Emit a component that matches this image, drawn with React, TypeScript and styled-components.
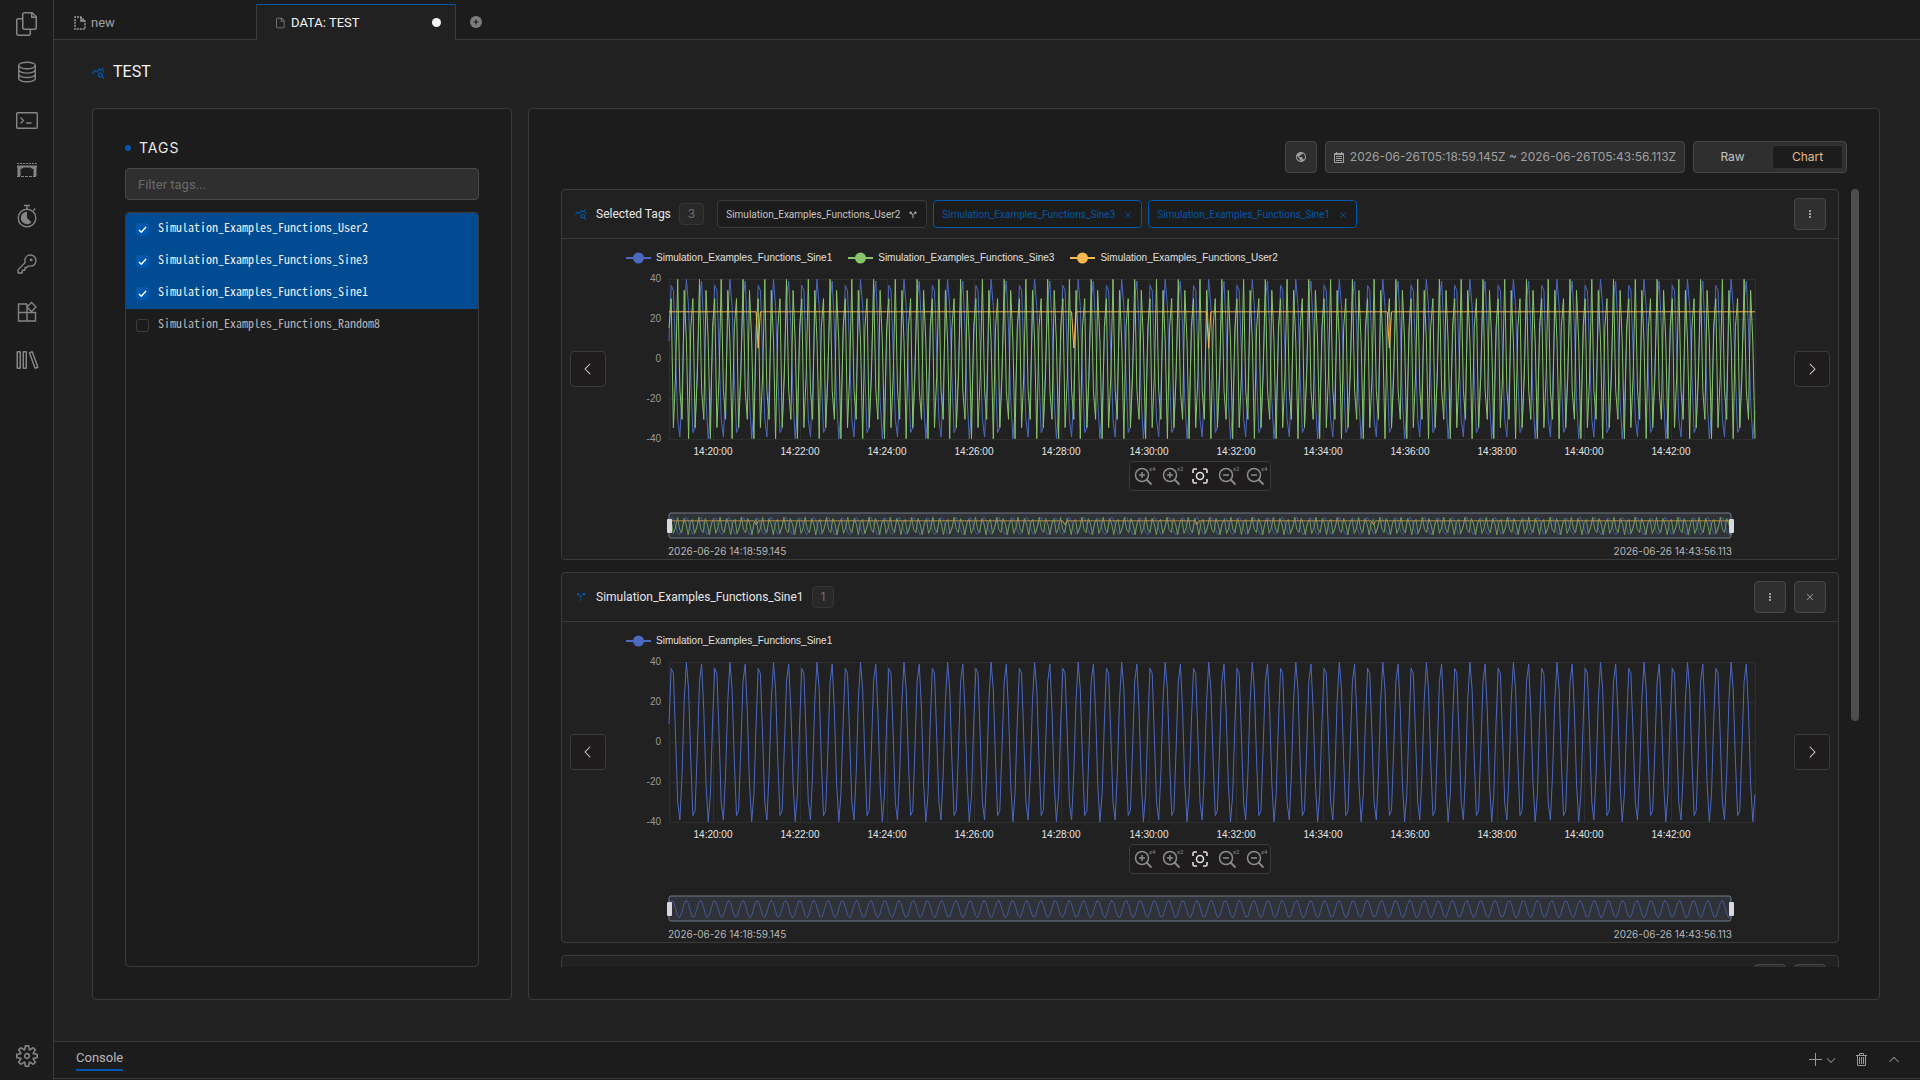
import React, { useEffect, useLayoutEffect, useRef, useState } from "react";
import styled, { createGlobalStyle, css } from "styled-components";
import {
  VscAdd,
  VscChevronDown,
  VscChevronLeft,
  VscChevronRight,
  VscChevronUp,
  VscClose,
  VscFile,
  VscFiles,
  VscKey,
  VscLibrary,
  VscSettingsGear,
  VscTrash,
} from "react-icons/vsc";
import { MdCallSplit, MdPublic } from "react-icons/md";

const color = {
  page: "#212121",
  panel: "#1c1c1c",
  border: "#3b3b3b",
  control: "#2f2f2f",
  controlBorder: "#484848",
  text: "#e8e8e8",
  muted: "#a0a0a0",
  faint: "#707070",
  accent: "#0057ad",
  selected: "#004b92",
};

const font = {
  ui: `Roboto, "Liberation Sans", sans-serif`,
  figures: `Inter, "Liberation Sans", sans-serif`,
  chart: `"Liberation Sans", Arial, sans-serif`,
  mono: `"Noto Sans Mono CJK JP", "Noto Sans CJK JP", monospace`,
};

const GlobalStyle = createGlobalStyle`
  *, *::before, *::after { box-sizing: border-box; }
  body {
    margin: 0;
    background: ${color.page};
    color: ${color.text};
    font-family: ${font.ui};
    font-size: 13px;
    line-height: 16px;
  }
  button, input { font: inherit; color: inherit; }
  svg { display: block; flex: none; }
`;

/* ---------- shell ---------- */

const Shell = styled.div`
  display: flex;
  height: 100vh;
  overflow: hidden;
`;

const SideBar = styled.nav`
  flex: none;
  width: 54px;
  display: flex;
  flex-direction: column;
  align-items: center;
  background: ${color.panel};
  border-right: 1px solid ${color.border};
`;

const SideButton = styled.button<{ $last?: boolean }>`
  width: 48px;
  height: 48px;
  display: grid;
  place-items: center;
  padding: 0;
  border: 0;
  background: none;
  color: #858585;
  ${(p) => p.$last && css`margin-top: auto;`}
`;

const Main = styled.div`
  flex: 1;
  min-width: 0;
  display: flex;
  flex-direction: column;
`;

/* ---------- tabs ---------- */

const TabBar = styled.div`
  flex: none;
  height: 40px;
  display: flex;
  align-items: flex-end;
  padding-left: 2px;
  background: ${color.panel};
  box-shadow: inset 0 -1px 0 ${color.border};
`;

const Tab = styled.button<{ $active?: boolean }>`
  width: 200px;
  height: 36px;
  display: flex;
  align-items: center;
  gap: 5px;
  padding: 0 14px 0 17px;
  border: 1px solid transparent;
  border-bottom: 0;
  background: none;
  color: ${color.muted};
  text-align: left;
  ${(p) =>
    p.$active &&
    css`
      border-color: ${color.accent} ${color.border} transparent;
      background: ${color.page};
      color: #f4f4f4;
    `}
`;

const TabIcon = styled.span`
  color: #858585;
`;

const TabLabel = styled.span`
  flex: 1;
`;

const UnsavedDot = styled.span`
  width: 9px;
  height: 9px;
  border-radius: 50%;
  background: #f4f4f4;
`;

const AddTab = styled.button`
  width: 40px;
  height: 36px;
  display: grid;
  place-items: center;
  padding: 0 0 1px;
  border: 0;
  background: none;
  color: #7d7d7d;
`;

/* ---------- page ---------- */

const Page = styled.main`
  flex: 1;
  min-height: 0;
  display: flex;
  flex-direction: column;
  padding: 21px 40px 41px 38px;
`;

const PageTitle = styled.h1`
  display: flex;
  align-items: center;
  gap: 8px;
  margin: 0 0 25px;
  font-size: 16px;
  font-weight: 400;
  line-height: 22px;
  color: #f4f4f4;
  svg {
    color: ${color.accent};
  }
`;

const Columns = styled.div`
  flex: 1;
  min-height: 0;
  display: flex;
  gap: 16px;
`;

const Panel = styled.section<{ $side?: boolean }>`
  flex: ${(p) => (p.$side ? "none" : "1")};
  width: ${(p) => (p.$side ? "420px" : "auto")};
  min-width: 0;
  display: flex;
  flex-direction: column;
  padding: 32px;
  background: ${color.panel};
  border: 1px solid ${color.border};
  border-radius: 4px;
`;

/* ---------- tag list ---------- */

const TagsHeading = styled.h2`
  display: flex;
  align-items: center;
  gap: 8px;
  margin: -4px 0 9px;
  font-family: ${font.figures};
  font-size: 14px;
  font-weight: 400;
  line-height: 22px;
  letter-spacing: 1px;
  &::before {
    content: "";
    width: 6px;
    height: 6px;
    border-radius: 50%;
    background: ${color.accent};
  }
`;

const FilterInput = styled.input`
  height: 32px;
  padding: 0 12px;
  border: 1px solid ${color.controlBorder};
  border-radius: 4px;
  background: ${color.control};
  &::placeholder {
    color: #6a6a6a;
  }
`;

const TagList = styled.ul`
  flex: 1;
  margin: 12px 0 0;
  padding: 0;
  list-style: none;
  border: 1px solid ${color.border};
  border-radius: 4px;
  overflow: hidden;
`;

const TagRow = styled.label<{ $on: boolean }>`
  display: flex;
  align-items: center;
  gap: 9px;
  height: 32px;
  padding: 0 10px;
  background: ${(p) => (p.$on ? color.selected : "none")};
  color: ${(p) => (p.$on ? "#f0f0f0" : "#b4b4b4")};
  font-family: ${font.mono};
  font-size: 12px;
`;

const TagName = styled.span`
  padding-bottom: 4px;
`;

const CheckSlot = styled.span`
  display: grid;
  place-items: center;
  > * {
    grid-area: 1 / 1;
  }
`;

const CheckBox = styled.input`
  appearance: none;
  width: 13px;
  height: 13px;
  margin: 0;
  border: 1px solid #3c3c3c;
  border-radius: 3px;
  &:checked {
    border-color: ${color.accent};
    background: ${color.accent};
  }
`;

const CheckMark = styled.svg`
  pointer-events: none;
`;

/* ---------- toolbar ---------- */

const Toolbar = styled.div`
  flex: none;
  display: flex;
  justify-content: flex-end;
  gap: 8px;
  margin-bottom: 16px;
`;

const ToolButton = styled.button<{ $wide?: boolean }>`
  width: ${(p) => (p.$wide ? "360px" : "32px")};
  height: 32px;
  display: flex;
  align-items: center;
  justify-content: center;
  gap: 6px;
  padding: 0;
  border: 1px solid ${color.controlBorder};
  border-radius: 4px;
  background: ${color.control};
  color: ${color.muted};
  font-family: ${font.figures};
  font-size: 12px;
`;

const Segment = styled.div`
  display: flex;
  gap: 4px;
  padding: 3px;
  border: 1px solid ${color.controlBorder};
  border-radius: 4px;
  background: ${color.control};
  font-family: ${font.figures};
  font-size: 12px;
`;

const SegmentButton = styled.button<{ $active?: boolean }>`
  width: 71px;
  padding: 0;
  border: 1px solid ${(p) => (p.$active ? "#333333" : "transparent")};
  border-radius: 3px;
  background: ${(p) => (p.$active ? color.panel : "none")};
  color: ${(p) => (p.$active ? "#e6b98a" : "#c4c4c4")};
`;

/* ---------- scroll area ---------- */

const ScrollArea = styled.div`
  flex: 1;
  min-height: 0;
  display: flex;
  gap: 12px;
  margin-right: -12px;
`;

const Scroller = styled.div`
  flex: 1;
  min-width: 0;
  display: flex;
  flex-direction: column;
  gap: 12px;
  overflow-y: auto;
  scrollbar-width: none;
`;

const ScrollTrack = styled.div`
  width: 8px;
`;

const ScrollThumb = styled.div`
  border-radius: 4px;
  background: #4d4d4d;
`;

/* ---------- chart card ---------- */

const Card = styled.article`
  flex: none;
  background: ${color.page};
  border: 1px solid ${color.border};
  border-radius: 4px;
`;

const CardHeader = styled.header`
  height: 49px;
  display: flex;
  align-items: center;
  gap: 8px;
  padding: 0 12px 0 13px;
  border-bottom: 1px solid ${color.border};
  font-size: 12px;
`;

const CardTitle = styled.h3`
  display: flex;
  align-items: center;
  gap: 9px;
  margin: 0;
  font-size: 12px;
  font-weight: 400;
  svg {
    color: ${color.accent};
  }
`;

const Count = styled.span`
  height: 22px;
  padding: 0 8px;
  border: 1px solid #363636;
  border-radius: 4px;
  background: #282828;
  color: ${color.faint};
  font-family: ${font.figures};
  line-height: 20px;
`;

const Chips = styled.div`
  display: flex;
  gap: 6px;
  padding-left: 5px;
`;

const Chip = styled.button<{ $on?: boolean }>`
  height: 28px;
  display: flex;
  align-items: center;
  gap: 8px;
  padding: 1px 8px 0;
  border: 1px solid ${(p) => (p.$on ? color.accent : color.border)};
  border-radius: 4px;
  background: ${color.panel};
  color: ${(p) => (p.$on ? color.accent : "#c4c4c4")};
  font-size: 10px;
`;

const CardActions = styled.div`
  display: flex;
  gap: 8px;
  margin-left: auto;
`;

const CardBody = styled.div`
  display: grid;
  grid-template-columns: 36px minmax(0, 1fr) 36px;
  grid-template-rows: 260px 60px;
  padding: 0 8px;
`;

const NavButton = styled.button`
  width: 36px;
  height: 36px;
  align-self: center;
  display: grid;
  place-items: center;
  padding: 0;
  border: 1px solid ${color.border};
  border-radius: 4px;
  background: #1e1c1c;
  color: #c4c4c4;
`;

const PlotColumn = styled.div`
  display: flex;
  flex-direction: column;
  align-items: center;
`;

const Legend = styled.ul`
  align-self: stretch;
  display: flex;
  gap: 16px;
  margin: 0;
  padding: 11px 20px 0;
  list-style: none;
  font-family: ${font.chart};
  font-size: 10px;
  color: #e0e0e0;
`;

const LegendItem = styled.li`
  display: flex;
  align-items: center;
  gap: 5px;
`;

const ZoomTools = styled.div`
  display: flex;
  align-items: center;
  height: 30px;
  border: 1px solid ${color.border};
  border-radius: 4px;
  background: #1e1c1c;
`;

const ZoomButton = styled.button<{ $bright?: boolean }>`
  width: 28px;
  height: 28px;
  display: grid;
  place-items: center;
  padding: 0;
  border: 0;
  background: none;
  color: ${(p) => (p.$bright ? "#e0e0e0" : "#8c8c8c")};
`;

const ChartSvg = styled.svg`
  width: 100%;
  font-family: ${font.chart};
  font-size: 10px;
`;

const SliderSvg = styled(ChartSvg)`
  grid-column: 2;
  font-family: ${font.figures};
`;

/* ---------- console ---------- */

const ConsoleBar = styled.footer`
  flex: none;
  height: 39px;
  display: flex;
  align-items: center;
  justify-content: space-between;
  padding: 0 18px 2px 22px;
  border-top: 1px solid ${color.border};
  background: ${color.panel};
  box-shadow: inset 0 -1px 0 ${color.panel}, inset 0 -2px 0 ${color.border};
`;

const ConsoleTab = styled.button`
  padding: 0 0 3px;
  border: 0;
  border-bottom: 2px solid ${color.accent};
  background: none;
  color: #b8b8b8;
`;

const ConsoleActions = styled.div`
  display: flex;
  align-items: center;
  gap: 16px;
`;

const IconButton = styled.button`
  display: flex;
  align-items: center;
  padding: 0;
  border: 0;
  background: none;
  color: #9a9a9a;
`;

/* ---------- drawings ---------- */

const DatabaseIcon = () => (
  <svg width="22" height="22" viewBox="0 0 22 22" fill="none" stroke="currentColor" strokeWidth="1.4">
    <ellipse cx="11" cy="4.5" rx="8.3" ry="3.3" />
    <path d="M2.7 4.5v13c0 1.8 3.7 3.3 8.3 3.3s8.3-1.5 8.3-3.3v-13M2.7 8.8c0 1.8 3.7 3.3 8.3 3.3s8.3-1.5 8.3-3.3M2.7 13.2c0 1.8 3.7 3.3 8.3 3.3s8.3-1.5 8.3-3.3" />
  </svg>
);

const TerminalIcon = () => (
  <svg width="22" height="17" viewBox="0 0 22 17" fill="none" stroke="currentColor">
    <rect x=".7" y=".7" width="20.6" height="15.6" rx="1" strokeWidth="1.4" />
    <path d="M4.5 5.5 7.5 8.5 4.5 11.5M10 11h5.5" strokeWidth="1.3" />
  </svg>
);

const ShelfIcon = () => (
  <svg width="22" height="20" viewBox="0 0 22 20" fill="none" stroke="currentColor">
    <path d="M1 5.5h20" strokeDasharray="2 1" />
    <path d="M1 8.5h20" strokeWidth="2" />
    <path d="M3 9v9M19 9v9" strokeWidth="3" />
    <path d="M4.5 10.5 7 9M17.5 10.5 15 9" strokeWidth="1.5" />
    <path d="M1 18.5h20" strokeDasharray="3 1" />
  </svg>
);

const TimerIcon = () => (
  <svg width="22" height="24" viewBox="0 0 22 24" fill="none" stroke="currentColor" strokeWidth="1.4">
    <circle cx="11" cy="14" r="8.8" />
    <path d="M8 1.5h6M11 1.5v3.5M17.5 6.5l1.8-2" />
    <path d="M11 14V7.8A6.2 6.2 0 1 0 15.5 18.3Z" fill="currentColor" stroke="none" />
  </svg>
);

const BlocksIcon = () => (
  <svg width="22" height="22" viewBox="0 0 22 22" fill="none" stroke="currentColor" strokeWidth="1.4">
    <path d="M11 3H2.5v17H19.5V11.5H2.5M11 3v17" />
    <path d="M15.5 1.5 20 6l-4.5 4.5L11 6Z" />
  </svg>
);

const AnalysisIcon = ({ size }: { size: number }) => (
  <svg width={size} height={size} viewBox="0 0 12 12" fill="none" stroke="currentColor" strokeWidth="1.1">
    <path d="M.5 7 2.5 4 4.5 5.5 6.5 2.500 8 4 10.5 1.5" />
    <rect x="6" y="6.5" width="3.5" height="3.3" rx="1" />
    <path d="M9 9.500 11 11.500M10.500 4v2" />
  </svg>
);

const KebabIcon = () => (
  <svg width="2" height="10" viewBox="0 0 2 10" fill="currentColor">
    <path d="M0 1h2v2H0zM0 4h2v2H0zM0 7h2v2H0z" />
  </svg>
);

const DraftFileIcon = () => (
  <svg width="12" height="14" viewBox="0 0 12 14" fill="none" stroke="currentColor" strokeWidth="1.4">
    <path d="M1 5V1h6l4 4v8H1V5" strokeDasharray="2 1" />
    <path d="M7 1v4h4" />
  </svg>
);

const PlusCircleIcon = () => (
  <svg width="12" height="12" viewBox="0 0 12 12">
    <circle cx="6" cy="6" r="6" fill="currentColor" />
    <path d="M6 3.5v5M3.5 6h5" stroke="#1c1c1c" strokeWidth="1.2" />
  </svg>
);

const CalendarIcon = () => (
  <svg width="10" height="11" viewBox="0 0 10 11" fill="none" stroke="currentColor">
    <path d="M.5 1.5h9v9h-9zM2.5 0v2M7.5 0v2" />
    <path d="M1 2.5h8M2 4.5h6M2 6.5h6M2 8.5h6" />
  </svg>
);

const ZoomIcon = ({ out, factor }: { out?: boolean; factor: string }) => (
  <svg width="24" height="20" viewBox="0 0 24 20" fill="none" stroke="currentColor" strokeWidth="1.5">
    <circle cx="10" cy="9" r="6.5" />
    <path d={out ? "M7 9h6" : "M7 9h6M10 6v6"} />
    <path d="M14.5 13.5 19.5 18.5" strokeWidth="1.8" />
    <text x="17" y="5" fontSize="6" fill="currentColor" stroke="none">
      {factor}
    </text>
  </svg>
);

const FocusIcon = () => (
  <svg width="18" height="18" viewBox="0 0 18 18" fill="none" stroke="currentColor" strokeWidth="1.6">
    <circle cx="9" cy="9" r="3.5" />
    <path d="M2 6V3.5Q2 2 3.5 2H6M12 2h2.5Q16 2 16 3.5V6M16 12v2.5Q16 16 14.5 16H12M6 16H3.5Q2 16 2 14.5V12" />
  </svg>
);

const LegendMark = ({ stroke }: { stroke: string }) => (
  <svg width="25" height="14" viewBox="0 0 25 14">
    <path d="M0 7h25" stroke={stroke} strokeWidth="2" />
    <circle cx="12.5" cy="7" r="5.5" fill={stroke} />
  </svg>
);

/* ---------- data ---------- */

const SAMPLES = 500;
const SPAN_SECONDS = 1497;
const FIRST_TICK = 61;

type Series = { name: string; stroke: string; values: number[] };

const wave = (startDegrees: number, stepDegrees: number) =>
  Array.from({ length: SAMPLES }, (_, i) => 40 * Math.cos(((startDegrees + i * stepDegrees) * Math.PI) / 180));

const dips = new Set([41, 186, 248, 331]);

const sine1: Series = { name: "Simulation_Examples_Functions_Sine1", stroke: "#4c69c0", values: wave(-77, 54) };
const sine3: Series = { name: "Simulation_Examples_Functions_Sine3", stroke: "#86c56c", values: wave(-67, 108) };
const user2: Series = {
  name: "Simulation_Examples_Functions_User2",
  stroke: "#fcb850",
  values: Array.from({ length: SAMPLES }, (_, i) => (dips.has(i) ? 5.4 : 23.6)),
};

const tagRows = [
  { name: user2.name, on: true },
  { name: sine3.name, on: true },
  { name: sine1.name, on: true },
  { name: "Simulation_Examples_Functions_Random8", on: false },
];

/* ---------- charts ---------- */

function useWidth<T extends Element>() {
  const ref = useRef<T>(null);
  const [width, setWidth] = useState(1188);
  useLayoutEffect(() => {
    const el = ref.current;
    if (!el) return;
    const measure = () => setWidth(Math.round(el.getBoundingClientRect().width));
    measure();
    const observer = new ResizeObserver(measure);
    observer.observe(el);
    return () => observer.disconnect();
  }, []);
  return [ref, width] as const;
}

const trace = (values: number[], left: number, width: number, middle: number, scale: number) =>
  values
    .map((v, i) => `${(left + (i * width) / (SAMPLES - 1)).toFixed(1)},${(middle - v * scale).toFixed(1)}`)
    .join(" ");

function LineChart({ series }: { series: Series[] }) {
  const [ref, width] = useWidth<SVGSVGElement>();
  const left = 63;
  const plot = width - left - 39;
  const top = 13;
  const ticks = Array.from({ length: 12 }, (_, i) => ({
    x: Math.round(left + ((FIRST_TICK + i * 120) / SPAN_SECONDS) * plot),
    label: `14:${20 + i * 2}:00`,
  }));
  return (
    <ChartSvg ref={ref} height="195">
      <g stroke="#2e2e2e" shapeRendering="crispEdges">
        {[40, 20, 0, -20, -40].map((v) => (
          <line key={v} x1={left} x2={left + plot} y1={top + 80 - v * 2} y2={top + 80 - v * 2} />
        ))}
        {[left, ...ticks.map((t) => t.x), left + plot].map((x) => (
          <line key={x} x1={x} x2={x} y1={top} y2={top + 160} />
        ))}
      </g>
      <g fill="#999999" textAnchor="end">
        {[40, 20, 0, -20, -40].map((v) => (
          <text key={v} x={left - 8} y={top + 83 - v * 2}>
            {v}
          </text>
        ))}
      </g>
      <g fill="#e4e4e4" textAnchor="middle">
        {ticks.map((t) => (
          <text key={t.label} x={t.x} y={top + 176}>
            {t.label}
          </text>
        ))}
      </g>
      {series.map((s) => (
        <polyline
          key={s.name}
          points={trace(s.values, left, plot, top + 80, 2)}
          fill="none"
          stroke={s.stroke}
          strokeLinejoin="bevel"
        />
      ))}
    </ChartSvg>
  );
}

function RangeSlider({ series }: { series: Series[] }) {
  const [ref, width] = useWidth<SVGSVGElement>();
  const left = 63;
  const range = width - left - 63;
  return (
    <SliderSvg ref={ref} height="60">
      <rect x={left} y="14" width={range} height="25" rx="2" fill="#2f3338" stroke="#727c88" />
      <g opacity="0.7">
        {series.map((s) => (
          <polyline
            key={s.name}
            points={trace(s.values, left, range, 27, 0.22)}
            fill="none"
            stroke={s.stroke}
            strokeLinejoin="bevel"
          />
        ))}
      </g>
      {[left, left + range].map((x) => (
        <rect key={x} x={x - 2} y="20" width="5" height="14" rx="1" fill="#d6dade" />
      ))}
      <g fill="#b8b8b8">
        <text x={left - 1} y="56">
          2026-06-26 14:18:59.145
        </text>
        <text x={left + range + 1} y="56" textAnchor="end">
          2026-06-26 14:43:56.113
        </text>
      </g>
    </SliderSvg>
  );
}

function ChartBody({ series }: { series: Series[] }) {
  const ref = useRef<HTMLDivElement>(null);
  const [seen, setSeen] = useState(false);

  // Charts below the fold are drawn once they scroll into view.
  useEffect(() => {
    const el = ref.current;
    if (!el) return;
    const observer = new IntersectionObserver((entries) => {
      if (entries.some((e) => e.isIntersecting)) setSeen(true);
    });
    observer.observe(el);
    return () => observer.disconnect();
  }, []);

  return (
    <CardBody ref={ref}>
      {seen && (
        <>
          <NavButton aria-label="Previous range">
            <VscChevronLeft size={18} />
          </NavButton>
          <PlotColumn>
            <Legend>
              {series.map((s) => (
                <LegendItem key={s.name}>
                  <LegendMark stroke={s.stroke} />
                  {s.name}
                </LegendItem>
              ))}
            </Legend>
            <LineChart series={series} />
            <ZoomTools>
              <ZoomButton aria-label="Zoom in four times">
                <ZoomIcon factor="x4" />
              </ZoomButton>
              <ZoomButton aria-label="Zoom in twice">
                <ZoomIcon factor="x2" />
              </ZoomButton>
              <ZoomButton aria-label="Focus" $bright>
                <FocusIcon />
              </ZoomButton>
              <ZoomButton aria-label="Zoom out twice">
                <ZoomIcon out factor="x2" />
              </ZoomButton>
              <ZoomButton aria-label="Zoom out four times">
                <ZoomIcon out factor="x4" />
              </ZoomButton>
            </ZoomTools>
          </PlotColumn>
          <NavButton aria-label="Next range">
            <VscChevronRight size={18} />
          </NavButton>
          <RangeSlider series={series} />
        </>
      )}
    </CardBody>
  );
}

function TagCard({ series }: { series: Series }) {
  return (
    <Card>
      <CardHeader>
        <CardTitle>
          <MdCallSplit size={12} />
          {series.name}
        </CardTitle>
        <Count>1</Count>
        <CardActions>
          <ToolButton aria-label="More">
            <KebabIcon />
          </ToolButton>
          <ToolButton aria-label="Close">
            <VscClose size={12} />
          </ToolButton>
        </CardActions>
      </CardHeader>
      <ChartBody series={[series]} />
    </Card>
  );
}

function ChartList() {
  const ref = useRef<HTMLDivElement>(null);
  const [thumb, setThumb] = useState({ size: 0, offset: 0 });
  const update = () => {
    const el = ref.current;
    if (!el) return;
    const ratio = el.clientHeight / el.scrollHeight;
    setThumb({ size: Math.round(el.clientHeight * ratio), offset: Math.round(el.scrollTop * ratio) });
  };
  useLayoutEffect(() => {
    update();
    window.addEventListener("resize", update);
    return () => window.removeEventListener("resize", update);
  }, []);
  return (
    <ScrollArea>
      <Scroller ref={ref} onScroll={update}>
        <Card>
          <CardHeader>
            <CardTitle>
              <AnalysisIcon size={12} />
              Selected Tags
            </CardTitle>
            <Count>3</Count>
            <Chips>
              <Chip>
                {user2.name}
                <MdCallSplit size={10} />
              </Chip>
              <Chip $on>
                {sine3.name}
                <VscClose size={10} />
              </Chip>
              <Chip $on>
                {sine1.name}
                <VscClose size={10} />
              </Chip>
            </Chips>
            <CardActions>
              <ToolButton aria-label="More">
                <KebabIcon />
              </ToolButton>
            </CardActions>
          </CardHeader>
          <ChartBody series={[sine1, sine3, user2]} />
        </Card>
        <TagCard series={sine1} />
        <TagCard series={sine3} />
      </Scroller>
      <ScrollTrack>
        <ScrollThumb style={{ height: thumb.size, marginTop: thumb.offset }} />
      </ScrollTrack>
    </ScrollArea>
  );
}

/* ---------- app ---------- */

const sideItems = [
  { label: "Explorer", icon: <VscFiles size={24} /> },
  { label: "Database", icon: <DatabaseIcon /> },
  { label: "Shell", icon: <TerminalIcon /> },
  { label: "Bridge", icon: <ShelfIcon /> },
  { label: "Timer", icon: <TimerIcon /> },
  { label: "Security key", icon: <VscKey size={22} /> },
  { label: "Extensions", icon: <BlocksIcon /> },
  { label: "References", icon: <VscLibrary size={24} /> },
];

export default function App() {
  const [tags, setTags] = useState(tagRows);
  const toggle = (name: string) =>
    setTags((rows) => rows.map((r) => (r.name === name ? { ...r, on: !r.on } : r)));

  return (
    <>
      <GlobalStyle />
      <Shell>
        <SideBar>
          {sideItems.map((item) => (
            <SideButton key={item.label} aria-label={item.label}>
              {item.icon}
            </SideButton>
          ))}
          <SideButton aria-label="Settings" $last>
            <VscSettingsGear size={22} />
          </SideButton>
        </SideBar>
        <Main>
          <TabBar>
            <Tab>
              <DraftFileIcon />
              <TabLabel>new</TabLabel>
            </Tab>
            <Tab $active>
              <TabIcon>
                <VscFile size={12} />
              </TabIcon>
              <TabLabel>DATA: TEST</TabLabel>
              <UnsavedDot />
            </Tab>
            <AddTab aria-label="Add tab">
              <PlusCircleIcon />
            </AddTab>
          </TabBar>
          <Page>
            <PageTitle>
              <AnalysisIcon size={13} />
              TEST
            </PageTitle>
            <Columns>
              <Panel $side>
                <TagsHeading>TAGS</TagsHeading>
                <FilterInput aria-label="Filter tags" placeholder="Filter tags..." />
                <TagList>
                  {tags.map((tag) => (
                    <li key={tag.name}>
                      <TagRow $on={tag.on}>
                        <CheckSlot>
                          <CheckBox type="checkbox" checked={tag.on} onChange={() => toggle(tag.name)} />
                          {tag.on && (
                            <CheckMark width="9" height="9" viewBox="0 0 9 9" fill="none" stroke="#ffffff" strokeWidth="1.4">
                              <path d="M1 5l2.3 2.3L8 2" />
                            </CheckMark>
                          )}
                        </CheckSlot>
                        <TagName>{tag.name}</TagName>
                      </TagRow>
                    </li>
                  ))}
                </TagList>
              </Panel>
              <Panel>
                <Toolbar>
                  <ToolButton aria-label="Time zone">
                    <MdPublic size={12} />
                  </ToolButton>
                  <ToolButton $wide>
                    <CalendarIcon />
                    2026-06-26T05:18:59.145Z ~ 2026-06-26T05:43:56.113Z
                  </ToolButton>
                  <Segment>
                    <SegmentButton>Raw</SegmentButton>
                    <SegmentButton $active>Chart</SegmentButton>
                  </Segment>
                </Toolbar>
                <ChartList />
              </Panel>
            </Columns>
          </Page>
          <ConsoleBar>
            <ConsoleTab>Console</ConsoleTab>
            <ConsoleActions>
              <IconButton aria-label="New console">
                <VscAdd size={16} />
                <VscChevronDown size={14} />
              </IconButton>
              <IconButton aria-label="Delete console">
                <VscTrash size={16} />
              </IconButton>
              <IconButton aria-label="Expand console">
                <VscChevronUp size={16} />
              </IconButton>
            </ConsoleActions>
          </ConsoleBar>
        </Main>
      </Shell>
    </>
  );
}
